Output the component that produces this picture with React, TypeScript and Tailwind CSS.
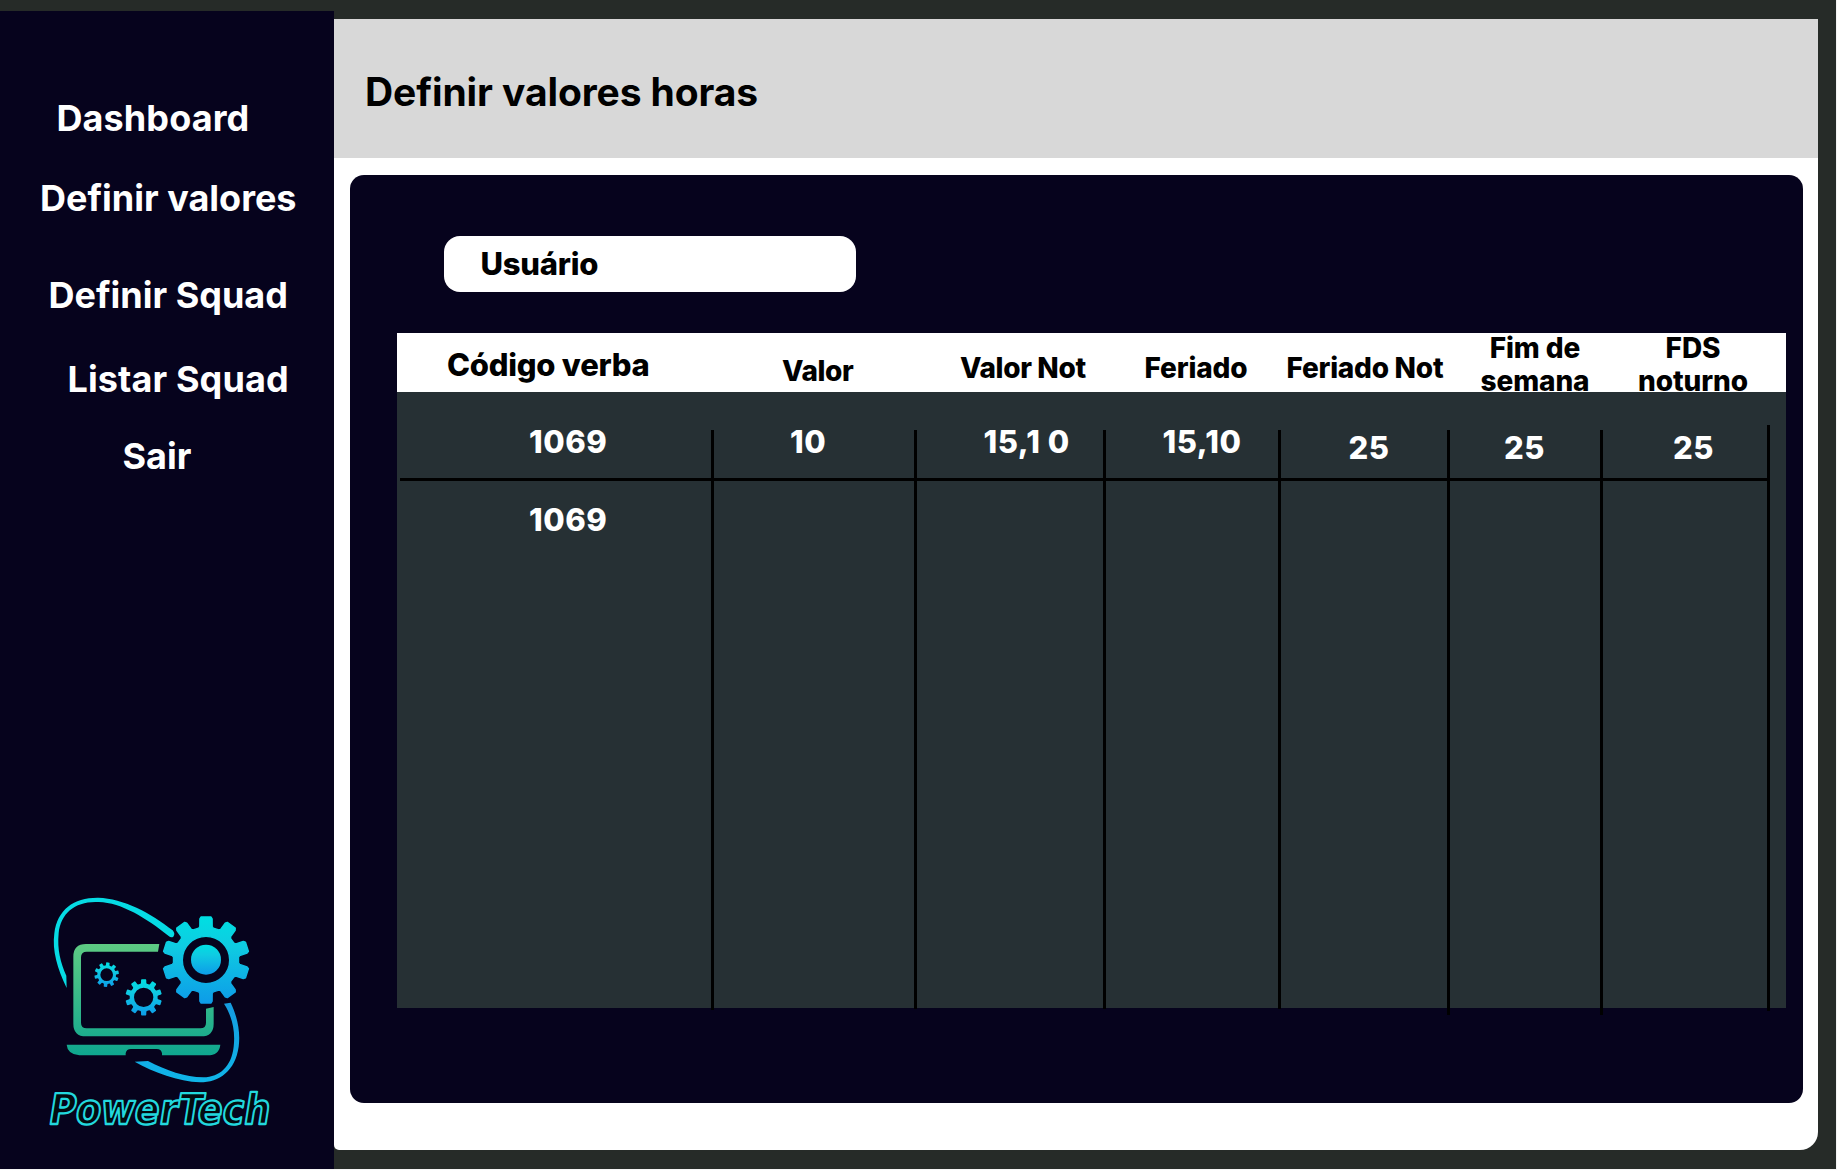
const COLUMNS = "grid grid-cols-[317px_203px_189px_175px_169px_153px_183px]";

const menu = [
  { label: "Dashboard", place: "mt-[84.5px] ml-[56.5px] tracking-[0.1px]" },
  { label: "Definir valores", place: "mt-[36.5px] ml-[40px]" },
  { label: "Definir Squad", place: "mt-[53px] ml-[48.5px]" },
  { label: "Listar Squad", place: "mt-[39.5px] ml-[67.5px] tracking-[0.1px]" },
  { label: "Sair", place: "mt-[33.5px] ml-[122.5px]" },
];

const headers = [
  { label: "Código verba", place: "pt-[13px] pl-[50px] text-[31px] leading-[38px] tracking-[-0.25px]" },
  { label: "Valor", place: "pt-[21px] pl-[68px] text-[28px] leading-[34px] tracking-[-0.4px]" },
  { label: "Valor Not", place: "pt-[18px] pl-[43px] text-[28px] leading-[34px] tracking-[-0.35px]" },
  { label: "Feriado", place: "pt-[18px] pl-[38.5px] text-[28px] leading-[34px] tracking-[-0.15px]" },
  { label: "Feriado Not", place: "pt-[18px] pl-[5.5px] text-[28px] leading-[34px] tracking-[-0.25px]" },
  { label: "Fim de semana", place: "-mt-[1px] ml-[30px] w-[110px] text-center text-[28px] leading-[33px] tracking-[-0.1px]" },
  { label: "FDS noturno", place: "-mt-[1px] ml-[34px] w-[112px] text-center text-[28px] leading-[33px] tracking-[-0.1px]" },
];

const values = [
  { label: "1069", place: "pt-[31px] pl-[132px]" },
  { label: "10", place: "pt-[31px] pl-[76px]" },
  { label: "15,1 0", place: "pt-[31px] pl-[66.5px]" },
  { label: "15,10", place: "pt-[31px] pl-[56.5px]" },
  { label: "25", place: "pt-[36.5px] pl-[67.5px]" },
  { label: "25", place: "pt-[36.5px] pl-[54px]" },
  { label: "25", place: "pt-[36.5px] pl-[70px]" },
];

const dividers = [
  "mt-[38px] mb-[-2px] border-r-[3px]",
  "mt-[38px] mb-[-1px] border-r-[3px]",
  "mt-[38px] mb-[-1px] border-r-[3px]",
  "mt-[38px] mb-[-1px] border-r-[3px]",
  "mt-[38px] mb-[-7px] border-r-[3px]",
  "mt-[38px] mb-[-7px] border-r-[3px]",
  "mt-[33px] mb-[-3px] mr-[16px] border-r-[3px]",
];

// Ten-toothed gear outline around (cx, cy), tilted by `tilt` degrees.
function gear(cx: number, cy: number, tip: number, root: number, tilt = 0) {
  const points: string[] = [];
  const at = (deg: number, r: number) => {
    const a = ((deg + tilt - 90) * Math.PI) / 180;
    points.push(`${(cx + r * Math.cos(a)).toFixed(1)},${(cy + r * Math.sin(a)).toFixed(1)}`);
  };
  for (let i = 0; i < 10; i++) {
    const d = i * 36;
    at(d - 13, root);
    at(d - 10.5, root * 1.04);
    at(d - 8.5, tip * 0.96);
    at(d - 6.5, tip);
    at(d + 6.5, tip);
    at(d + 8.5, tip * 0.96);
    at(d + 10.5, root * 1.04);
    at(d + 13, root);
  }
  return `M${points.join("L")}Z`;
}

function ring(cx: number, cy: number, r: number) {
  return `M${cx - r},${cy}a${r},${r} 0 1,0 ${2 * r},0a${r},${r} 0 1,0 ${-2 * r},0Z`;
}

function Logo() {
  return (
    <svg viewBox="0 0 780 780" className="ml-[30px] mt-[402px] h-[260px] w-[260px] shrink-0 overflow-visible" aria-label="PowerTech">
      <defs>
        <linearGradient id="cyan" x1="0" y1="0" x2="0" y2="1">
          <stop offset="0" stopColor="#00dfe2" />
          <stop offset="0.35" stopColor="#0fcbe2" />
          <stop offset="1" stopColor="#0d9ce8" />
        </linearGradient>
        <linearGradient id="green" gradientUnits="userSpaceOnUse" x1="0" y1="190" x2="0" y2="525">
          <stop offset="0" stopColor="#5ecb83" />
          <stop offset="1" stopColor="#0fa78f" />
        </linearGradient>
        <linearGradient id="orbit" gradientUnits="userSpaceOnUse" x1="0" y1="360" x2="0" y2="606">
          <stop offset="0" stopColor="#159be0" />
          <stop offset="1" stopColor="#10b5e8" />
        </linearGradient>
      </defs>
      <path
        d="M110,324C82,266 66,212 73,160C82,88 132,52 205,53C280,56 362,98 428,151Q437,161 430,170Q423,174 416,168C350,115 275,68 206,66C138,62 92,98 86,160C81,208 92,250 109,287Z"
        fill="#06dbe4"
      />
      <path
        d="M582,371L602,368C622,410 632,455 626,500C616,572 568,607 510,607C445,604 372,578 314,545L354,543C410,572 464,591 520,592C570,590 604,560 611,500C617,450 604,405 582,371Z"
        fill="url(#orbit)"
      />
      <path
        d="M388,192H168Q130,192 130,230V431Q130,469 168,469H513Q551,469 551,431V381L528,386V428Q528,445 511,445H170Q153,445 153,428V232Q153,215 170,215H384Z"
        fill="url(#green)"
      />
      <path
        d="M110,494H571Q568,526 532,526H396V520Q394,507 380,507H303Q289,507 287,520V526H148Q112,522 110,494Z"
        fill="url(#green)"
      />
      <path d={gear(528, 240, 130, 98) + ring(528, 240, 71)} fill="url(#cyan)" stroke="url(#cyan)" strokeWidth="4" strokeLinejoin="round" fillRule="evenodd" />
      <circle cx="528" cy="239" r="45" fill="url(#cyan)" />
      <path d={gear(230, 284, 37, 28, 6) + ring(230, 284, 19)} fill="url(#cyan)" fillRule="evenodd" />
      <path d={gear(341, 352, 55, 42) + ring(341, 352, 29)} fill="url(#cyan)" fillRule="evenodd" />
      <text
        transform="translate(52 731) skewX(-9)"
        textLength="664"
        lengthAdjust="spacingAndGlyphs"
        fontSize="127"
        fontFamily="'DejaVu Sans', sans-serif"
        fontWeight="700"
        fill="#020b10"
        stroke="#22d8de"
        strokeWidth="7"
        strokeLinejoin="round"
      >
        PowerTech
      </text>
    </svg>
  );
}

export default function App() {
  return (
    <div className="flex h-[1170px] w-[1837px] overflow-hidden border-r border-b border-[#f4f4f4] bg-[#262b28] font-['Inter',sans-serif] font-bold">
      <nav className="mt-[11px] flex h-[1158px] w-[333.5px] shrink-0 flex-col bg-[#06031d] text-white">
        {menu.map((item) => (
          <a key={item.label} className={`self-start whitespace-nowrap text-[36px] leading-[44px] ${item.place}`}>
            {item.label}
          </a>
        ))}
        <Logo />
      </nav>

      <main className="mt-[19px] flex h-[1131px] w-[1484.5px] shrink-0 flex-col rounded-br-[18px] rounded-bl-[5px] bg-white">
        <header className="h-[139px] shrink-0 bg-[#d8d8d8] pt-[49px] pl-[31.5px]">
          <h1 className="whitespace-nowrap text-[39px] leading-[47px] tracking-[-0.1px] text-black">Definir valores horas</h1>
        </header>

        <section className="mt-[17px] ml-[16.5px] h-[927.5px] w-[1453px] rounded-[14px] bg-[#06031d] pl-[47px]">
          <div className="flex h-[158px] pt-[61px] pl-[47px]">
            <div className="h-[55.5px] w-[411.5px] rounded-[16px] bg-white pt-[9px] pl-[36.5px] text-[31px] leading-[38px] font-extrabold tracking-[-0.25px] text-black">
              Usuário
            </div>
          </div>

          <div className="w-[1389px]">
            <div className={`${COLUMNS} h-[59px] bg-white font-extrabold text-black`}>
              {headers.map((h) => (
                <div key={h.label} className={h.place}>
                  {h.label}
                </div>
              ))}
            </div>

            <div className="relative h-[616px] bg-[#263034] text-[31px] leading-[38px] font-extrabold tracking-[0.5px] text-white">
              <div className={`${COLUMNS} h-[86px]`}>
                {values.map((v, i) => (
                  <div key={i} className={v.place}>
                    {v.label}
                  </div>
                ))}
              </div>
              <div className="ml-[3px] h-[3px] w-[1368px] bg-black" />
              <div className={COLUMNS}>
                <div className="pt-[20px] pl-[132px]">1069</div>
              </div>
              <div className={`${COLUMNS} absolute inset-0`}>
                {dividers.map((d, i) => (
                  <div key={i} className={`border-black ${d}`} />
                ))}
              </div>
            </div>
          </div>
        </section>
      </main>
    </div>
  );
}
